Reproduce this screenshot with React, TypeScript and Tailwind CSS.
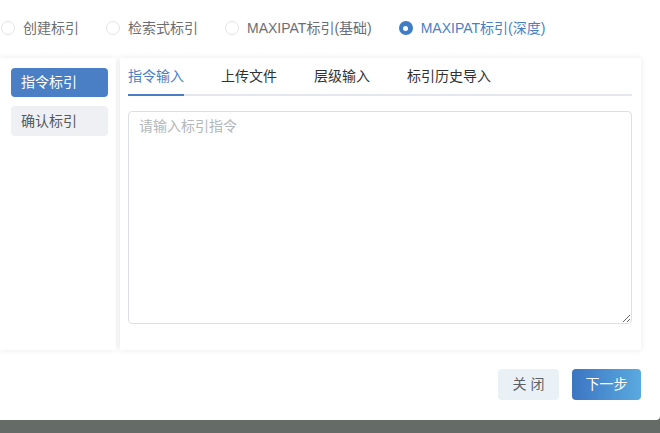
const radios = [
  { label: "创建标引", checked: false },
  { label: "检索式标引", checked: false },
  { label: "MAXIPAT标引(基础)", checked: false },
  { label: "MAXIPAT标引(深度)", checked: true },
];

const tabs = ["指令输入", "上传文件", "层级输入", "标引历史导入"];

export default function App() {
  return (
    <div className="w-[660px] h-[433px] bg-[#656b66] overflow-hidden font-['Liberation_Sans','Noto_Sans_CJK_SC',sans-serif] text-[14px]">
      <div className="h-[420px] bg-white rounded-br-[4px] pr-[19px]">
        {/* radio row */}
        <div className="h-[56px] flex items-center pl-[1px]">
          {radios.map((r) => (
            <label key={r.label} className="flex items-center mr-[27px]">
              {r.checked ? (
                <span className="w-[14px] h-[14px] rounded-full bg-[#3f7cc4] flex items-center justify-center">
                  <span className="w-[5px] h-[5px] rounded-full bg-white" />
                </span>
              ) : (
                <span className="w-[14px] h-[14px] rounded-full border border-[#e2e4e8] bg-white" />
              )}
              <span
                className={
                  "ml-[8px] " + (r.checked ? "text-[#4a7fc6]" : "text-[#6b6e73]")
                }
              >
                {r.label}
              </span>
            </label>
          ))}
        </div>

        {/* panels */}
        <div className="mt-[2px] flex gap-[4px] h-[292px]">
          <div className="w-[116px] bg-white shadow-[0_0_6px_rgba(0,0,0,0.09)] pt-[10px] pl-[11px]">
            <div className="w-[97px] h-[29px] rounded-[4px] bg-[#4a7fc6] text-white flex items-center pl-[10px]">
              指令标引
            </div>
            <div className="mt-[9px] w-[97px] h-[30px] rounded-[4px] bg-[#eef0f3] text-[#55585d] flex items-center pl-[10px]">
              确认标引
            </div>
          </div>

          <div className="flex-1 bg-white shadow-[0_0_6px_rgba(0,0,0,0.09)] pl-[8px] pr-[9px] flex flex-col">
            <div className="h-[38px] flex border-b-2 border-[#e4e7ed]">
              {tabs.map((t, i) => (
                <div
                  key={t}
                  className={
                    "h-[38px] flex items-center mr-[37px] -mb-[2px] border-b-2 " +
                    (i === 0
                      ? "text-[#4a7fc6] border-[#4a7fc6]"
                      : "text-[#303133] border-transparent")
                  }
                >
                  {t}
                </div>
              ))}
            </div>
            <textarea
              className="mt-[15px] h-[213px] w-full border border-[#dcdfe6] rounded-[4px] px-[10px] py-[4px] text-[14px] text-[#606266] placeholder-[#b3b6bb] outline-none resize-y"
              placeholder="请输入标引指令"
            />
          </div>
        </div>

        {/* footer */}
        <div className="mt-[19px] flex justify-end gap-[13px]">
          <button className="w-[61px] h-[31px] rounded-[4px] bg-[#e9f1f7] text-[#5c5f63] tracking-[4px] pl-[4px]">
            关闭
          </button>
          <button className="w-[69px] h-[31px] rounded-[4px] bg-gradient-to-r from-[#3c75c2] to-[#5aaadf] text-white">
            下一步
          </button>
        </div>
      </div>
    </div>
  );
}
